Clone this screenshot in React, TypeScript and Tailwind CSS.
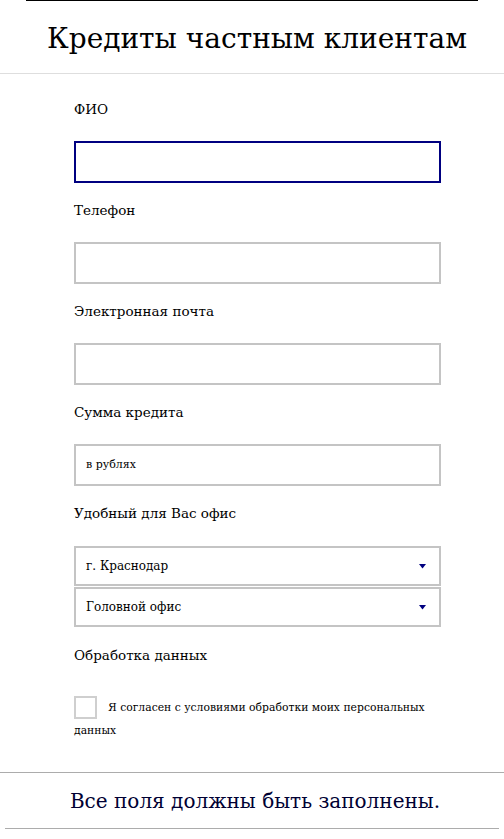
import React from 'react';

const font = { fontFamily: '"DejaVu Serif", "Liberation Serif", serif' };

const Field: React.FC<{ label: string; first?: boolean; active?: boolean; placeholder?: string }> = ({
  label,
  first,
  active,
  placeholder,
}) => (
  <div className={first ? 'pt-[25px]' : 'pt-[17px]'}>
    <div className="h-[20px] text-[13.5px] leading-[20px] text-black">{label}</div>
    <div
      className={`mt-[22px] h-[42px] border-2 bg-white flex items-center px-[10px] text-[11px] text-black ${
        active ? 'border-[#000080]' : 'border-[#c4c4c4]'
      }`}
    >
      {placeholder}
    </div>
  </div>
);

const Select: React.FC<{ value: string }> = ({ value }) => (
  <div className="h-[40px] border-2 border-[#c4c4c4] bg-white flex items-center justify-between px-[10px] text-[12px] text-black">
    <span>{value}</span>
    <svg width="7" height="5" viewBox="0 0 7 5" className="mr-[3px]">
      <polygon points="0,0 7,0 3.5,4.5" fill="#000080" />
    </svg>
  </div>
);

export default function App() {
  return (
    <div className="w-[504px] h-[839px] bg-white overflow-hidden" style={font}>
      <div className="mx-[26px] w-[452px] border-t border-black" />
      <div className="h-[72px] flex items-center justify-center pt-[4px] pl-[10px] text-[28px] text-black">
        Кредиты частным клиентам
      </div>
      <div className="border-t border-[#dedede]" />
      <div className="ml-[74px] w-[367px]">
        <Field label="ФИО" first active />
        <Field label="Телефон" />
        <Field label="Электронная почта" />
        <Field label="Сумма кредита" placeholder="в рублях" />
        <div className="pt-[17px]">
          <div className="h-[20px] text-[13.5px] leading-[20px] text-black">Удобный для Вас офис</div>
          <div className="mt-[23px] flex flex-col gap-[1px]">
            <Select value="г. Краснодар" />
            <Select value="Головной офис" />
          </div>
        </div>
        <div className="pt-[18px] h-[20px] text-[13.5px] leading-[20px] text-black box-content">Обработка данных</div>
        <div className="mt-[31px] text-[10.8px] leading-[23px] text-black">
          <span className="inline-block align-top w-[23px] h-[23px] border-2 border-[#cfcfcf] mr-[11px]" />
          Я согласен с условиями обработки моих персональных данных
        </div>
      </div>
      <div className="mt-[30px] border-t border-[#acacac]" />
      <div className="h-[55px] flex items-center justify-center pl-[6px] text-[20px] text-[#000033]">
        Все поля должны быть заполнены.
      </div>
      <div className="ml-[5px] w-[494px] border-t border-[#acacac]" />
    </div>
  );
}
